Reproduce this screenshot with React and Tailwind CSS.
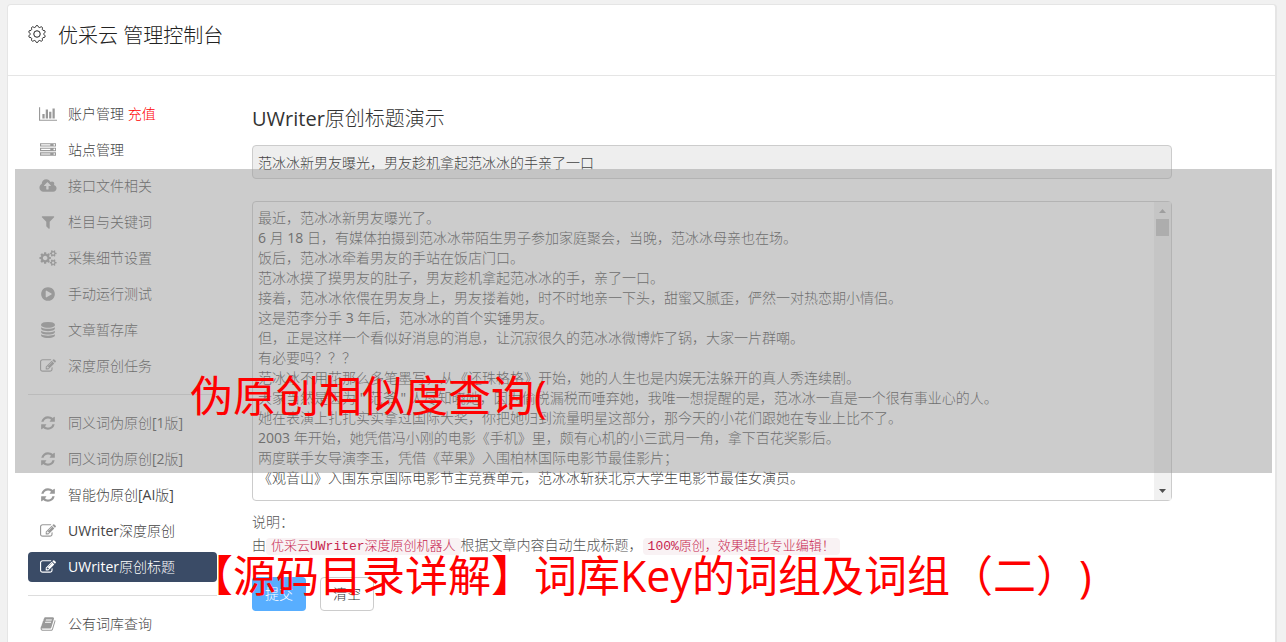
import React from 'react';
import clsx from 'clsx';

const ICONS = {
  chart: {
    box: '0 0 2048 1792',
    d: 'M640 896v512h-256v-512h256zm384-512v1024h-256v-1024h256zm1024 1152v128h-2048v-1536h128v1408h1920zm-640-896v768h-256v-768h256zm384-384v1152h-256v-1152h256z',
  },
  server: {
    box: '0 0 1792 1792',
    d: 'M128 1408h1024v-128h-1024v128zm0-512h1024v-128h-1024v128zm1568 448q0-40-28-68t-68-28-68 28-28 68 28 68 68 28 68-28 28-68zm-1568-960h1024v-128h-1024v128zm1568 448q0-40-28-68t-68-28-68 28-28 68 28 68 68 28 68-28 28-68zm0-512q0-40-28-68t-68-28-68 28-28 68 28 68 68 28 68-28 28-68zm96 832v384h-1792v-384h1792zm0-512v384h-1792v-384h1792zm0-512v384h-1792v-384h1792z',
  },
  upload: {
    box: '0 0 1920 1792',
    d: 'M1280 864q0-14-9-23l-352-352q-9-9-23-9t-23 9l-351 351q-10 12-10 24 0 14 9 23t23 9h224v352q0 13 9.5 22.5t22.5 9.5h192q13 0 22.5-9.5t9.5-22.5v-352h224q13 0 22.5-9.5t9.5-22.5zm640 288q0 159-112.5 271.5t-271.5 112.5h-1088q-185 0-316.5-131.5t-131.5-316.5q0-130 70-240t188-165q-2-30-2-43 0-212 150-362t362-150q156 0 285.5 87t188.5 231q71-62 166-62 106 0 181 75t75 181q0 76-41 138 130 31 213.5 135.5t83.5 238.5z',
  },
  filter: {
    box: '0 0 1792 1792',
    d: 'M1595 295q17 41-14 70l-493 493v742q0 42-39 59-13 5-25 5-27 0-45-19l-256-256q-19-19-19-45v-486l-493-493q-31-29-14-70 17-39 59-39h1280q42 0 59 39z',
  },
  cogs: {
    box: '0 0 1920 1792',
    d: 'M896 896q0-106-75-181t-181-75-181 75-75 181 75 181 181 75 181-75 75-181zm768 512q0-52-38-90t-90-38-90 38-38 90q0 53 37.5 90.5t90.5 37.5 90.5-37.5 37.5-90.5zm0-1024q0-52-38-90t-90-38-90 38-38 90q0 53 37.5 90.5t90.5 37.5 90.5-37.5 37.5-90.5zm-384 421v185q0 10-7 19.5t-16 10.5l-155 24q-11 35-32 76 34 48 90 115 7 11 7 20 0 12-7 19-23 30-82.5 89.5t-78.5 59.5q-11 0-21-7l-115-90q-37 19-77 31-11 108-23 155-7 24-30 24h-186q-11 0-20-7.5t-10-17.5l-23-153q-34-10-75-31l-118 89q-7 7-20 7-11 0-21-8-144-133-144-160 0-9 7-19 10-14 41-53t47-61q-23-44-35-82l-152-24q-10-1-17-9.5t-7-19.5v-185q0-10 7-19.5t16-10.5l155-24q11-35 32-76-34-48-90-115-7-11-7-20 0-12 7-20 22-30 82-89t79-59q11 0 21 7l115 90q34-18 77-32 11-108 23-154 7-24 30-24h186q11 0 20 7.5t10 17.5l23 153q34 10 75 31l118-89q8-7 20-7 11 0 21 8 144 133 144 160 0 9-7 19-12 16-42 54t-45 60q23 48 34 82l152 23q10 2 17 10.5t7 19.5zm640 533v140q0 16-149 31-12 27-30 52 51 113 51 138 0 4-4 7-122 71-124 71-8 0-46-47t-52-68q-20 2-30 2t-30-2q-14 21-52 68t-46 47q-2 0-124-71-4-3-4-7 0-25 51-138-18-25-30-52-149-15-149-31v-140q0-16 149-31 13-29 30-52-51-113-51-138 0-4 4-7 4-2 35-20t59-34 30-16q8 0 46 46.5t52 67.5q20-2 30-2t30 2q51-71 92-112l6-2q4 0 124 70 4 3 4 7 0 25-51 138 17 23 30 52 149 15 149 31zm0-1024v140q0 16-149 31-12 27-30 52 51 113 51 138 0 4-4 7-122 71-124 71-8 0-46-47t-52-68q-20 2-30 2t-30-2q-14 21-52 68t-46 47q-2 0-124-71-4-3-4-7 0-25 51-138-18-25-30-52-149-15-149-31v-140q0-16 149-31 13-29 30-52-51-113-51-138 0-4 4-7 4-2 35-20t59-34 30-16q8 0 46 46.5t52 67.5q20-2 30-2t30 2q51-71 92-112l6-2q4 0 124 70 4 3 4 7 0 25-51 138 17 23 30 52 149 15 149 31z',
  },
  play: {
    box: '0 0 1792 1792',
    d: 'M896 128q209 0 385.5 103t279.5 279.5 103 385.5-103 385.5-279.5 279.5-385.5 103-385.5-103-279.5-279.5-103-385.5 103-385.5 279.5-279.5 385.5-103zm384 823q32-18 32-55t-32-55l-544-320q-31-19-64-1-32 19-32 56v640q0 37 32 56 16 8 32 8 17 0 32-9z',
  },
  database: {
    box: '0 0 1792 1792',
    d: 'M896 768q237 0 443-43t325-127v170q0 69-103 128t-280 93.5-385 34.5-385-34.5-280-93.5-103-128v-170q119 84 325 127t443 43zm0 768q237 0 443-43t325-127v170q0 69-103 128t-280 93.5-385 34.5-385-34.5-280-93.5-103-128v-170q119 84 325 127t443 43zm0-384q237 0 443-43t325-127v170q0 69-103 128t-280 93.5-385 34.5-385-34.5-280-93.5-103-128v-170q119 84 325 127t443 43zm0-1152q208 0 385 34.5t280 93.5 103 128v128q0 69-103 128t-280 93.5-385 34.5-385-34.5-280-93.5-103-128v-128q0-69 103-128t280-93.5 385-34.5z',
  },
  edit: {
    box: '0 0 1792 1792',
    d: 'M888 1184l116-116-152-152-116 116v56h96v96h56zm440-720q-16-16-33 1l-350 350q-17 17-1 33t33-1l350-350q17-17 1-33zm80 594v190q0 119-84.5 203.5t-203.5 84.5h-832q-119 0-203.5-84.5t-84.5-203.5v-832q0-119 84.5-203.5t203.5-84.5h832q63 0 117 25 15 7 18 23 3 17-9 29l-49 49q-14 14-32 8-23-6-45-6h-832q-66 0-113 47t-47 113v832q0 66 47 113t113 47h832q66 0 113-47t47-113v-126q0-13 9-22l64-64q15-15 35-7t20 29zm-96-738l288 288-672 672h-288v-288zm444 132l-92 92-288-288 92-92q28-28 68-28t68 28l152 152q28 28 28 68t-28 68z',
  },
  refresh: {
    box: '0 0 1792 1792',
    d: 'M1639 1056q0 5-1 7-64 268-268 434.5t-478 166.5q-146 0-282.5-55t-243.5-157l-129 129q-19 19-45 19t-45-19-19-45v-448q0-26 19-45t45-19h448q26 0 45 19t19 45-19 45l-137 137q71 66 161 102t187 36q134 0 250-65t186-179q11-17 53-117 8-23 30-23h192q13 0 22.5 9.5t9.5 22.5zm25-800v448q0 26-19 45t-45 19h-448q-26 0-45-19t-19-45 19-45l138-138q-148-137-349-137-134 0-250 65t-186 179q-11 17-53 117-8 23-30 23h-199q-13 0-22.5-9.5t-9.5-22.5v-7q65-268 270-434.5t480-166.5q146 0 284 55.5t245 156.5l130-129q19-19 45-19t45 19 19 45z',
  },
  book: {
    box: '0 0 1792 1792',
    d: 'M1703 478q40 57 18 129l-275 906q-19 64-76.5 107.5t-122.5 43.5h-923q-77 0-148.5-53.5t-99.5-131.5q-24-67-2-127 0-4 3-27t4-37q1-8-3-21.5t-3-19.5q2-11 8-21t16.5-23.5 16.5-23.5q23-38 45-91.5t30-91.5q3-10 .5-30t-.5-28q3-11 17-28t17-23q21-36 42-92t25-90q1-9-2.5-32t.5-28q4-13 22-30.5t22-22.5q19-26 42.5-84.5t27.5-96.5q1-8-3-25.5t-2-26.5q2-8 9-18t18-23 17-21q8-12 16.5-30.5t15-35 16-36 19.5-32 26.5-23.5 36-11.5 47.5 5.5l-1 3q38-9 51-9h761q74 0 114 56t18 130l-274 906q-36 119-71.5 153.5t-128.5 34.5h-869q-27 0-38 15-11 16-1 43 24 70 144 70h923q29 0 56-15.5t35-41.5l300-987q7-22 5-57 38 15 59 43zm-1064 2q-4 13 2 22.5t20 9.5h608q13 0 25.5-9.5t16.5-22.5l21-64q4-13-2-22.5t-20-9.5h-608q-13 0-25.5 9.5t-16.5 22.5zm-83 256q-4 13 2 22.5t20 9.5h608q13 0 25.5-9.5t16.5-22.5l21-64q4-13-2-22.5t-20-9.5h-608q-13 0-25.5 9.5t-16.5 22.5z',
  },
};

const MENU = [
  [
    { icon: 'chart', label: '账户管理', extra: '充值' },
    { icon: 'server', label: '站点管理' },
    { icon: 'upload', label: '接口文件相关' },
    { icon: 'filter', label: '栏目与关键词' },
    { icon: 'cogs', label: '采集细节设置' },
    { icon: 'play', label: '手动运行测试' },
    { icon: 'database', label: '文章暂存库' },
    { icon: 'edit', label: '深度原创任务' },
  ],
  [
    { icon: 'refresh', label: '同义词伪原创[1版]' },
    { icon: 'refresh', label: '同义词伪原创[2版]' },
    { icon: 'refresh', label: '智能伪原创[AI版]' },
    { icon: 'edit', label: 'UWriter深度原创' },
    { icon: 'edit', label: 'UWriter原创标题', active: true },
  ],
  [{ icon: 'book', label: '公有词库查询' }],
];

const ARTICLE = `最近，范冰冰新男友曝光了。
6 月 18 日，有媒体拍摄到范冰冰带陌生男子参加家庭聚会，当晚，范冰冰母亲也在场。
饭后，范冰冰牵着男友的手站在饭店门口。
范冰冰摸了摸男友的肚子，男友趁机拿起范冰冰的手，亲了一口。
接着，范冰冰依偎在男友身上，男友搂着她，时不时地亲一下头，甜蜜又腻歪，俨然一对热恋期小情侣。
这是范李分手 3 年后，范冰冰的首个实锤男友。
但，正是这样一个看似好消息的消息，让沉寂很久的范冰冰微博炸了锅，大家一片群嘲。
有必要吗？？？
范冰冰不用花那么多笔墨写，从《还珠格格》开始，她的人生也是内娱无法躲开的真人秀连续剧。
大家当然是因为 " 范爷 " 人尽知晓她，因为偷税漏税而唾弃她，我唯一想提醒的是，范冰冰一直是一个很有事业心的人。
她在表演上扎扎实实拿过国际大奖，你把她归到流量明星这部分，那今天的小花们跟她在专业上比不了。
2003 年开始，她凭借冯小刚的电影《手机》里，颇有心机的小三武月一角，拿下百花奖影后。
两度联手女导演李玉，凭借《苹果》入围柏林国际电影节最佳影片；
《观音山》入围东京国际电影节主竞赛单元，范冰冰斩获北京大学生电影节最佳女演员。
`;

// ten rounded teeth around a circle
const GEAR_PATH =
  Array.from({ length: 80 }, (_, i) => {
    const a = (i / 80) * Math.PI * 2;
    const r = 15.4 + 1.6 * Math.tanh(2 * Math.cos(a * 10));
    return `${i ? 'L' : 'M'}${(18 + r * Math.sin(a)).toFixed(2)} ${(18 - r * Math.cos(a)).toFixed(2)}`;
  }).join('') + 'Z';

function GearIcon() {
  return (
    <svg viewBox="0 0 36 36" fill="none" stroke="currentColor" strokeWidth="2" strokeLinejoin="round" className="mt-[3px] h-[18px] w-[18px]">
      <path d={GEAR_PATH} />
      <circle cx="18" cy="18" r="6.5" />
    </svg>
  );
}

function MenuIcon({ name }) {
  const { box, d } = ICONS[name];
  const wide = name === 'chart' || name === 'upload' || name === 'cogs';
  return (
    <svg viewBox={box} fill="currentColor" className={wide ? 'h-4 w-[18px]' : 'h-4 w-4'}>
      <path d={d} />
    </svg>
  );
}

function MenuItem({ icon, label, extra, active }) {
  return (
    <li>
      <a
        href="#"
        className={clsx(
          'flex h-[30px] items-center gap-2.5 rounded pl-2.5',
          active ? 'bg-[#3a4b66] text-white' : 'text-[#444]'
        )}
      >
        <span className={clsx('flex w-5 justify-center', !active && 'text-[#999]')}>
          <MenuIcon name={icon} />
        </span>
        <span>
          {label}
          {extra && <span className="text-[#f00]"> {extra}</span>}
        </span>
      </a>
    </li>
  );
}

function Sidebar() {
  return (
    <nav className="w-[189px] shrink-0">
      {MENU.map((group, i) => (
        <ul
          key={i}
          className={clsx('flex flex-col gap-1.5', i > 0 && 'mt-[13px] border-t border-[#ddd] pt-[13px]')}
        >
          {group.map((item) => (
            <MenuItem key={item.label} {...item} />
          ))}
        </ul>
      ))}
    </nav>
  );
}

function Code({ children }) {
  return (
    <code className="rounded bg-[#f9f2f4] px-[5px] py-px font-['Liberation_Mono','Noto_Sans_CJK_SC_Light','Noto_Sans_CJK_SC',monospace] text-[13px] leading-4 text-[#c7254e]">
      {children}
    </code>
  );
}

function TitleForm() {
  return (
    <main className="max-w-[920px] min-w-0 flex-1">
      <h2 className="pt-1.5 text-xl leading-7 text-[#333]">UWriter原创标题演示</h2>
      <input
        type="text"
        readOnly
        aria-label="标题"
        defaultValue="范冰冰新男友曝光，男友趁机拿起范冰冰的手亲了一口"
        className="mt-3 block h-[34px] w-full rounded border border-[#ccc] bg-[#eee] px-[5px] text-[#444] outline-none"
      />
      <div className="relative mt-[22px]">
        <textarea
          aria-label="正文"
          defaultValue={ARTICLE}
          className="block h-[300px] w-full resize-none overflow-hidden rounded border border-[#ccc] bg-white py-1.5 pr-6 pl-[5px] leading-5 text-[#444] outline-none"
        />
        {/* scrollbar track */}
        <div className="absolute inset-y-px right-px flex w-[17px] flex-col items-center bg-[#f1f1f1] py-[7px]">
          <svg viewBox="0 0 7 4" className="h-1 w-[7px]" fill="#a3a3a3">
            <path d="M0 4L3.5 0L7 4z" />
          </svg>
          <div className="mt-1.5 h-[17px] w-[13px] bg-[#c1c1c1]" />
          <svg viewBox="0 0 7 4" className="mt-auto h-1 w-[7px]" fill="#505050">
            <path d="M0 0L3.5 4L7 0z" />
          </svg>
        </div>
      </div>
      <div className="mt-[9px] leading-[23px] text-[#555]">
        <p>说明：</p>
        <p>
          由<Code>优采云UWriter深度原创机器人</Code>根据文章内容自动生成标题，
          <Code>100%原创，效果堪比专业编辑！</Code>
        </p>
      </div>
      <div className="mt-[21px] flex gap-3.5">
        <button type="button" className="h-[34px] rounded bg-[#58aeff] px-[13px] text-white">
          提交
        </button>
        <button type="button" className="h-[34px] rounded border border-[#ccc] bg-white px-3 text-[#333]">
          清空
        </button>
      </div>
    </main>
  );
}

export default function App() {
  return (
    <div className="relative flex min-h-screen flex-col overflow-hidden bg-[#f1f1f1] pt-1 pr-[9px] pl-[7px] font-['Open_Sans','Noto_Sans_CJK_SC_Light','Noto_Sans_CJK_SC',sans-serif] text-sm [text-spacing-trim:space-all]">
      <div className="flex-1 rounded-t border border-r-2 border-b-0 border-[#e5e5e5] bg-white">
        <header className="flex h-[71px] items-start gap-3 border-b border-[#e5e5e5] px-5 pt-[17px] text-[#222]">
          <GearIcon />
          <h1 className="text-xl leading-7">优采云 管理控制台</h1>
        </header>
        <div className="flex gap-[35px] px-5 pt-[23px]">
          <Sidebar />
          <TitleForm />
        </div>
      </div>

      <div className="pointer-events-none absolute top-[169px] right-3.5 left-[15px] h-[304px] bg-[#999]/50" />
      <div className="pointer-events-none absolute top-[306px] left-[190px] font-['Open_Sans','Noto_Sans_CJK_SC',sans-serif] text-[43px] leading-[180px] whitespace-nowrap text-[#f00]">
        <p>伪原创相似度查询(</p>
        <p>【源码目录详解】词库Key的词组及词组（二）)</p>
      </div>
    </div>
  );
}
